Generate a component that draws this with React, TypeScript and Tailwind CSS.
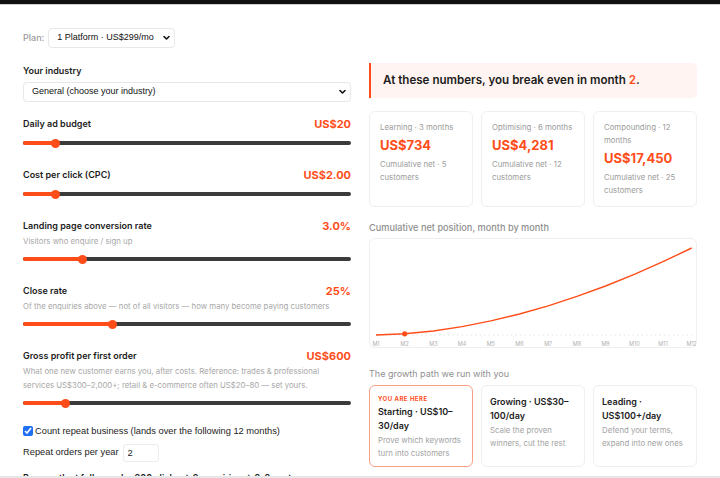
import { useState } from "react";

const ORANGE = "#ff4d1a";

type SliderRowProps = {
  label: string;
  value: string;
  hint?: string;
  pct: number;
};

const SliderRow = ({ label, value, hint, pct }: SliderRowProps) => {
  // thumb is 9px, keep it inside the track like a native range input
  const left = `calc(${pct}% - ${(pct / 100) * 9}px)`;
  return (
    <div className="mt-[18px] first:mt-0">
      <div className="flex items-center justify-between leading-[16px]">
        <span className="text-[9px] font-semibold text-[#1c1c1c]">{label}</span>
        <span className="text-[11px] font-bold" style={{ color: ORANGE }}>
          {value}
        </span>
      </div>
      {hint && <p className="text-[7.8px] leading-[14px] text-[#a8a8a8]">{hint}</p>}
      <div className="relative mt-[5px] h-[12px]">
        <div className="absolute left-0 right-0 top-[4px] h-[4px] rounded-full bg-[#3b3b3b]" />
        <div
          className="absolute left-0 top-[4px] h-[4px] rounded-full bg-[#ff4d1a]"
          style={{ width: `calc(${left} + 4px)` }}
        />
        <div
          className="absolute top-[1.5px] h-[9px] w-[9px] rounded-full bg-[#ff4d1a]"
          style={{ left }}
        />
      </div>
    </div>
  );
};

const Chevron = () => (
  <svg width="7" height="5" viewBox="0 0 7 5" className="pointer-events-none absolute right-[5px] top-1/2 -translate-y-1/2">
    <path d="M1 1l2.5 2.5L6 1" fill="none" stroke="#111" strokeWidth="1.6" strokeLinecap="round" strokeLinejoin="round" />
  </svg>
);

const phases = [
  { label: "Learning · 3 months", value: "US$734", note: "Cumulative net · 5 customers" },
  { label: "Optimising · 6 months", value: "US$4,281", note: "Cumulative net · 12 customers" },
  { label: "Compounding · 12 months", value: "US$17,450", note: "Cumulative net · 25 customers" },
];

const path = [
  { here: true, title: "Starting · US$10–30/day", desc: "Prove which keywords turn into customers" },
  { here: false, title: "Growing · US$30–100/day", desc: "Scale the proven winners, cut the rest" },
  { here: false, title: "Leading · US$100+/day", desc: "Defend your terms, expand into new ones" },
];

const NetChart = () => {
  const xs = Array.from({ length: 12 }, (_, i) => 6 + i * 28.7);
  const ys = xs.map((_, i) => 96 - 87 * Math.pow(i / 11, 1.8));
  const d = xs.map((x, i) => `${i === 0 ? "M" : "L"}${x.toFixed(1)} ${ys[i].toFixed(1)}`).join(" ");
  return (
    <svg viewBox="0 0 326 108" className="block h-[108px] w-full">
      <line x1="6" y1="96" x2="322" y2="96" stroke="#dcdcdc" strokeWidth="0.8" strokeDasharray="1.5 3" />
      <path d={d} fill="none" stroke={ORANGE} strokeWidth="1.4" strokeLinejoin="round" />
      <circle cx={xs[1]} cy={ys[1]} r="2.6" fill={ORANGE} />
      {xs.map((x, i) => (
        <text key={i} x={x} y="107" textAnchor="middle" fontSize="5.5" fill="#b0b0b0" fontFamily="Inter, sans-serif">
          M{i + 1}
        </text>
      ))}
    </svg>
  );
};

export default function App() {
  const [repeat, setRepeat] = useState(true);
  const [orders, setOrders] = useState("2");

  return (
    <div className="min-h-[478px] bg-white font-['Inter',sans-serif] text-[#1c1c1c]">
      <div className="h-[5px] border-b border-[#cfcfcf] bg-[#111]" />

      <div className="px-[23px] pt-[23px]">
        <div className="flex items-center gap-[4px]">
          <span className="text-[9px] font-medium text-[#9a9a9a]">Plan:</span>
          <div className="relative">
            <select className="block h-[20px] w-[127px] appearance-none rounded-[4px] border border-[#e8e8e8] bg-white pl-[8px] font-['Liberation_Sans',Arial,sans-serif] text-[9px] text-[#111] outline-none">
              <option>1 Platform · US$299/mo</option>
            </select>
            <Chevron />
          </div>
        </div>

        <div className="mt-[15px] grid grid-cols-2 gap-[18px]">
          {/* inputs */}
          <div>
            <div className="text-[9px] font-semibold leading-[16px]">Your industry</div>
            <div className="relative mt-[3px]">
              <select className="block h-[20px] w-full appearance-none rounded-[4px] border border-[#e8e8e8] bg-white pl-[8px] font-['Liberation_Sans',Arial,sans-serif] text-[9px] text-[#111] outline-none">
                <option>General (choose your industry)</option>
              </select>
              <Chevron />
            </div>

            <div className="mt-[14px]">
              <SliderRow label="Daily ad budget" value="US$20" pct={8.9} />
              <SliderRow label="Cost per click (CPC)" value="US$2.00" pct={8.9} />
              <SliderRow label="Landing page conversion rate" value="3.0%" hint="Visitors who enquire / sign up" pct={17.1} />
              <SliderRow
                label="Close rate"
                value="25%"
                hint="Of the enquiries above — not of all visitors — how many become paying customers"
                pct={26.5}
              />
              <SliderRow
                label="Gross profit per first order"
                value="US$600"
                hint="What one new customer earns you, after costs. Reference: trades & professional services US$300–2,000+; retail & e-commerce often US$20–80 — set yours."
                pct={11.8}
              />
            </div>

            <label className="mt-[16px] flex items-center gap-[2px] font-['Liberation_Sans',Arial,sans-serif] text-[9.3px] leading-[12px] text-[#1c1c1c]">
              <input
                type="checkbox"
                checked={repeat}
                onChange={(e) => setRepeat(e.target.checked)}
                className="m-0 h-[10px] w-[10px] accent-[#1e6ff2]"
              />
              Count repeat business (lands over the following 12 months)
            </label>

            <div className="mt-[7px] flex items-center gap-[4px] font-['Liberation_Sans',Arial,sans-serif] text-[9.3px]">
              <span>Repeat orders per year</span>
              <input
                value={orders}
                onChange={(e) => setOrders(e.target.value)}
                className="h-[18px] w-[36px] rounded-[3px] border border-[#ececec] px-[4px] text-[9.3px] outline-none"
              />
            </div>

            <p className="mt-[9px] text-[9px] font-semibold leading-[14px]">
              Per month at full speed: ~300 clicks → 9 enquiries → 2–3 customers
            </p>
          </div>

          {/* results */}
          <div>
            <div className="flex h-[35px] items-center rounded-r-[5px] border-l-2 border-[#ff4d1a] bg-[#fff4f1] pl-[12px] text-[11.6px] font-semibold">
              At these numbers, you break even in month&nbsp;<span className="text-[#ff4d1a]">2</span>.
            </div>

            <div className="mt-[13px] grid grid-cols-3 gap-[8px]">
              {phases.map((p) => (
                <div key={p.label} className="h-[96px] rounded-[6px] border border-[#efefef] px-[10px] pt-[9px]">
                  <div className="text-[7.8px] leading-[13px] text-[#9c9c9c]">{p.label}</div>
                  <div className="mt-[1px] text-[13px] font-bold leading-[20px] text-[#ff4d1a]">{p.value}</div>
                  <div className="mt-[3px] text-[7.8px] leading-[13px] text-[#9c9c9c]">{p.note}</div>
                </div>
              ))}
            </div>

            <div className="mt-[14px] text-[9.2px] font-medium leading-[14px] text-[#8f8f8f]">
              Cumulative net position, month by month
            </div>
            <div className="mt-[3px] rounded-[6px] border border-[#efefef]">
              <NetChart />
            </div>

            <div className="mt-[19px] text-[9px] leading-[14px] text-[#8f8f8f]">The growth path we run with you</div>
            <div className="mt-[4px] grid grid-cols-3 gap-[8px]">
              {path.map((s) => (
                <div
                  key={s.title}
                  className={`h-[82px] rounded-[6px] px-[8px] pt-[8px] ${
                    s.here ? "border-[1.5px] border-[#fa9f86]" : "border border-[#efefef]"
                  }`}
                >
                  {s.here && (
                    <div className="text-[6px] font-bold uppercase leading-[9px] tracking-[0.08em] text-[#ff4d1a]">
                      You are here
                    </div>
                  )}
                  <div className={`text-[9px] font-semibold leading-[14px] ${s.here ? "mt-[2px]" : "mt-[1px]"}`}>
                    {s.title}
                  </div>
                  <div className="mt-[1px] text-[7.8px] leading-[13px] text-[#a3a3a3]">{s.desc}</div>
                </div>
              ))}
            </div>
          </div>
        </div>
      </div>

      <div className="fixed bottom-0 left-0 right-0 h-[2px] bg-[#e6e6e6]" />
    </div>
  );
}
